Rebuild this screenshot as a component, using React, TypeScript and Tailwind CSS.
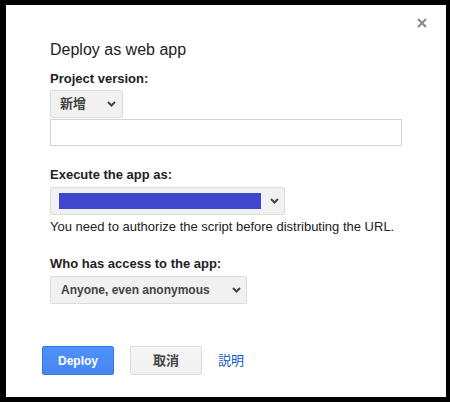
import React from 'react'

function Chevron() {
  return (
    <svg width="9" height="6" viewBox="0 0 9 6" className="shrink-0">
      <path d="M1 1 L4.5 4.5 L8 1" fill="none" stroke="#444" strokeWidth="2" />
    </svg>
  )
}

function Label({ children }: { children: React.ReactNode }) {
  return <div className="text-[13px] leading-4 font-bold text-[#222]">{children}</div>
}

export default function App() {
  return (
    <div className="relative box-border w-[450px] h-[402px] bg-white border-solid border-black border-l-[6px] border-t-[5px] border-r-[4px] border-b-[5px] font-['Liberation_Sans','Noto_Sans_CJK_JP',sans-serif] text-[#222]">
      {/* close */}
      <button aria-label="Close" className="absolute left-[411px] top-[13px] w-[10px] h-[10px]">
        <svg width="10" height="10" viewBox="0 0 10 10">
          <path d="M1 1 L9 9 M9 1 L1 9" stroke="#8a8a8a" strokeWidth="2.2" />
        </svg>
      </button>

      <div className="pl-[44px] pt-[35px]">
        <h1 className="text-[16px] leading-5 font-normal text-[#222]">Deploy as web app</h1>

        <div className="mt-[11px]">
          <Label>Project version:</Label>
        </div>
        <div className="mt-[3px] w-[73px] h-[28px] box-border flex items-center justify-between pl-[9px] pr-[6px] bg-[#f1f1f1] border border-[#dcdcdc] rounded-[2px]">
          <span className="text-[13px] font-bold text-[#444]">新增</span>
          <Chevron />
        </div>
        <div className="mt-[1px] w-[352px] h-[27px] box-border border border-[#d4d4d4] bg-white" />

        <div className="mt-[21px]">
          <Label>Execute the app as:</Label>
        </div>
        <div className="mt-[4px] w-[235px] h-[28px] box-border flex items-center justify-between pl-[8px] pr-[5px] bg-[#f1f1f1] border border-[#dcdcdc] rounded-[2px]">
          <div className="w-[202px] h-[16px] bg-[#3f48cc]" />
          <Chevron />
        </div>
        <p className="mt-[4px] text-[13px] leading-4 text-[#222]">
          You need to authorize the script before distributing the URL.
        </p>

        <div className="mt-[21px]">
          <Label>Who has access to the app:</Label>
        </div>
        <div className="mt-[4px] w-[197px] h-[28px] box-border flex items-center justify-between pl-[10px] pr-[5px] bg-[#f1f1f1] border border-[#dcdcdc] rounded-[2px]">
          <span className="text-[12px] font-bold text-[#444]">Anyone, even anonymous</span>
          <Chevron />
        </div>

        <div className="-ml-[8px] mt-[42px] flex items-center gap-4">
          <button className="w-[72px] h-[29px] box-border rounded-[2px] border border-[#3079ed] bg-gradient-to-b from-[#4d90fe] to-[#4787ed] text-white text-[12px] font-bold">
            Deploy
          </button>
          <button className="w-[72px] h-[29px] box-border rounded-[2px] border border-[#dcdcdc] bg-gradient-to-b from-[#f5f5f5] to-[#f1f1f1] text-[#444] text-[13px] font-bold">
            取消
          </button>
          <a className="text-[13px] text-[#15c] cursor-pointer">説明</a>
        </div>
      </div>
    </div>
  )
}
